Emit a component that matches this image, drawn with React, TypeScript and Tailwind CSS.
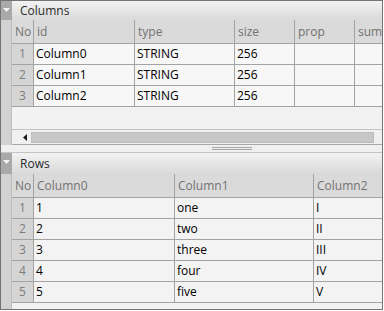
import React from "react";

const font = { fontFamily: '"Open Sans", "Noto Sans", sans-serif' };

function Band({ label }: { label: string }) {
  return (
    <div className="flex h-full">
      <div className="w-[11px] bg-[#a9a9a9] flex justify-center pt-[7px]">
        <svg width="7" height="4" viewBox="0 0 7 4">
          <path d="M0 0 L7 0 L3.5 4 Z" fill="#f2f2f2" />
        </svg>
      </div>
      <div className="flex-1 bg-gradient-to-b from-[#f3f3f3] to-[#d9d9d9] flex items-center pl-[8px] text-[12px] text-[#2b2b2b]">
        {label}
      </div>
    </div>
  );
}

type Col = { label: string; w: string };

function Table({ cols, rows, cellBg }: { cols: Col[]; rows: string[][]; cellBg: string }) {
  return (
    <div className="flex flex-col">
      <div className="flex h-[24px] bg-[#dadada] border-b border-[#a3a3a3] text-[#727272]">
        <div className="w-[22px] shrink-0 border-r border-[#a3a3a3] flex items-center pl-[3px]">No</div>
        {cols.map((c, i) => (
          <div key={i} className={`${c.w} border-r border-[#a3a3a3] flex items-center pl-[3px] overflow-hidden whitespace-nowrap`}>
            {c.label}
          </div>
        ))}
      </div>
      {rows.map((r, ri) => (
        <div key={ri} className="flex h-[21px] border-b border-[#a3a3a3]">
          <div className="w-[22px] shrink-0 bg-[#d5d5d5] border-r border-[#a3a3a3] flex items-center justify-center text-[#7d7d7d]">
            {ri + 1}
          </div>
          {cols.map((c, ci) => (
            <div key={ci} className={`${c.w} ${cellBg} border-r border-[#a3a3a3] flex items-center pl-[2px] text-black overflow-hidden whitespace-nowrap`}>
              {r[ci] ?? ""}
            </div>
          ))}
        </div>
      ))}
    </div>
  );
}

export default function App() {
  const colCols: Col[] = [
    { label: "id", w: "w-[101px] shrink-0" },
    { label: "type", w: "w-[100px] shrink-0" },
    { label: "size", w: "w-[60px] shrink-0" },
    { label: "prop", w: "w-[60px] shrink-0" },
    { label: "sumtype", w: "w-[40px] shrink-0" },
  ];
  const colRows = [
    ["Column0", "STRING", "256", "", ""],
    ["Column1", "STRING", "256", "", ""],
    ["Column2", "STRING", "256", "", ""],
  ];
  const rowCols: Col[] = [
    { label: "Column0", w: "w-[141px] shrink-0" },
    { label: "Column1", w: "w-[139px] shrink-0" },
    { label: "Column2", w: "w-[80px] shrink-0" },
  ];
  const rowRows = [
    ["1", "one", "I"],
    ["2", "two", "II"],
    ["3", "three", "III"],
    ["4", "four", "IV"],
    ["5", "five", "V"],
  ];
  return (
    <div className="w-[384px] h-[311px] bg-white">
      <div
        className="w-[383px] h-[310px] border border-[#737373] bg-[#f2f2f2] flex flex-col overflow-hidden text-[12px] leading-none"
        style={font}
      >
        {/* Columns section */}
        <div className="h-[19px] shrink-0">
          <Band label="Columns" />
        </div>
        <div className="h-[125px] shrink-0 flex">
          <div className="w-[11px] shrink-0 bg-[#d2d2d2] border-r border-[#bdbdbd]" />
          <div className="flex-1 flex flex-col overflow-hidden">
            <Table cols={colCols} rows={colRows} cellBg="bg-[#f7f7f7]" />
            <div className="flex-1" />
            <div className="h-[16px] shrink-0 border-t border-[#c3c3c3] border-b border-b-[#a8a8a8] bg-[#f0f0f0] flex items-center">
              <div className="w-[19px] shrink-0 flex justify-end pr-[4px]">
                <svg width="4" height="7" viewBox="0 0 4 7">
                  <path d="M4 0 L4 7 L0 3.5 Z" fill="#1a1a1a" />
                </svg>
              </div>
              <div className="w-[343px] h-[11px] bg-[#c7c7c7] border border-[#bdbdbd]" />
            </div>
          </div>
        </div>
        {/* Splitter */}
        <div className="h-[7px] shrink-0 bg-[#f0f0f0] flex flex-col items-center justify-center gap-[1px] pl-[80px]">
          <div className="w-[40px] h-px bg-[#a6a6a6]" />
          <div className="w-[40px] h-px bg-[#a6a6a6]" />
        </div>
        {/* Rows section */}
        <div className="h-[22px] shrink-0 border-t border-[#c4c4c4]">
          <Band label="Rows" />
        </div>
        <div className="flex-1 flex">
          <div className="w-[11px] shrink-0 bg-[#d2d2d2] border-r border-[#bdbdbd]" />
          <div className="flex-1 flex flex-col overflow-hidden">
            <Table cols={rowCols} rows={rowRows} cellBg="bg-[#f3f3f3]" />
          </div>
        </div>
      </div>
    </div>
  );
}
